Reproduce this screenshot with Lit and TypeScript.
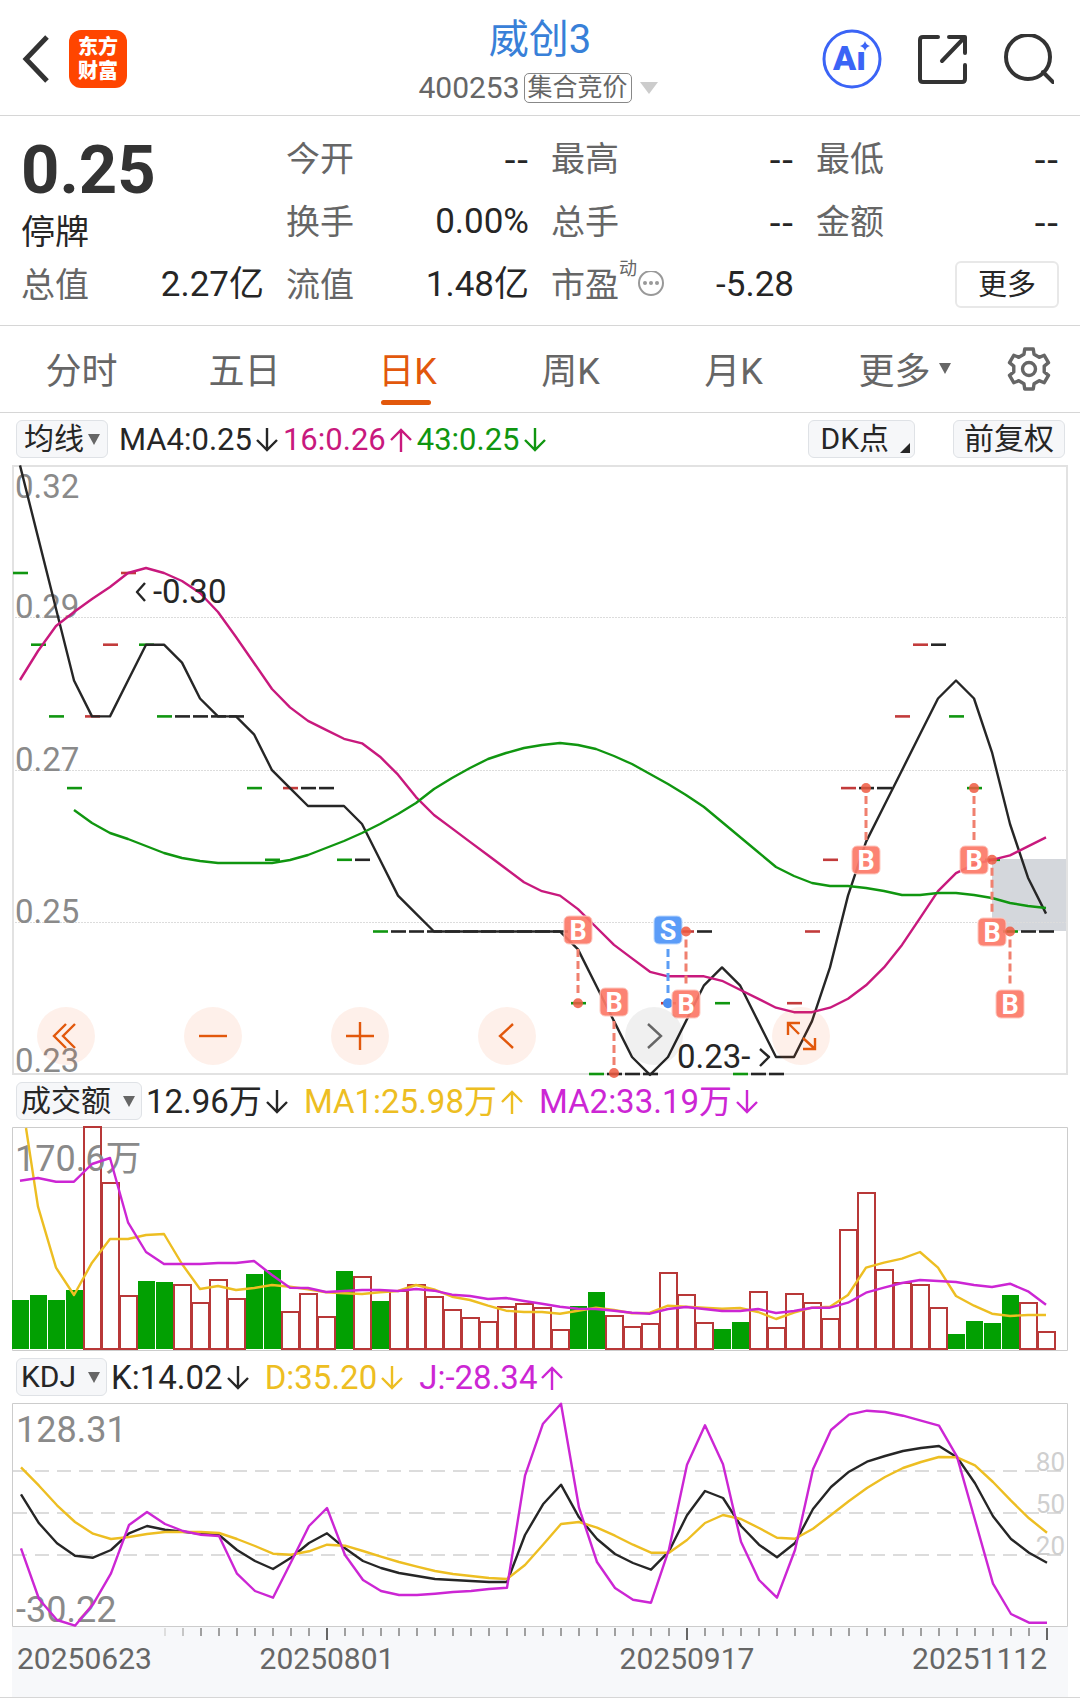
import { LitElement, html, svg, css } from "lit";
import { customElement, property, state } from "lit/decorators.js";
import { classMap } from "lit/directives/class-map.js";

type Tone = "up" | "down" | "flat";

const STEP = 18;
const xAt = (i: number, origin = 20) => origin + STEP * i;
const points = (ys: number[], origin = 20, first = 0) =>
  ys.map((y, i) => `${xAt(i + first, origin)},${y.toFixed(1)}`).join(" ");

/* Closing prices in cents, three earlier sessions first. */
const EARLIER = [33, 32, 31];
const CLOSES = [
  30, 29, 28, 27, 28, 29, 30, 29, 28, 28, 28, 28, 28, 27, 26, 27, 27, 27, 26, 26,
  25, 25, 25, 25, 25, 25, 25, 25, 25, 25, 25, 24, 23, 23, 23, 23, 24, 25, 25, 24,
  23, 23, 23, 24, 25, 26, 27, 27, 27, 28, 29, 29, 28, 27, 26, 25, 25, 25,
];
const priceY = (cents: number) => 931.5 + (25 - cents) * 71.7;
const average = (list: number[], end: number, n: number) =>
  list.slice(end - n + 1, end + 1).reduce((a, b) => a + b, 0) / n;

const ALL = [...EARLIER, ...CLOSES];
const MA4 = CLOSES.map((_, i) => priceY(average(ALL, i + 3, 4)));
const MA16 = [
  680, 651, 626, 612, 599, 587, 573, 568, 573, 581, 593, 612, 637, 663, 689,
  ...CLOSES.slice(15).map((_, i) => priceY(average(CLOSES, i + 15, 16))),
];
const MA43 = [
  810, 823, 833, 839, 846, 853, 858, 861, 863, 863, 863, 863, 860, 855, 848, 841,
  833, 824, 814, 803, 789, 778, 768, 759, 753, 748, 745, 743, 745, 749, 756, 764,
  774, 784, 795, 807, 822, 837, 852, 867, 876, 883, 886, 886, 888, 891, 895, 895,
  893, 893, 895, 898, 903, 906, 908,
];

const toneAt = (i: number): Tone => {
  const before = i ? CLOSES[i - 1] : EARLIER[2];
  return CLOSES[i] > before ? "up" : CLOSES[i] < before ? "down" : "flat";
};

interface Marker { i: number; y: number; dot: number; side: "B" | "S"; }
const MARKERS: Marker[] = [
  { i: 31, y: 930, dot: 24, side: "B" },
  { i: 33, y: 1002, dot: 23, side: "B" },
  { i: 36, y: 930, dot: 24, side: "S" },
  { i: 37, y: 1004, dot: 25, side: "B" },
  { i: 47, y: 860, dot: 27, side: "B" },
  { i: 53, y: 860, dot: 27, side: "B" },
  { i: 54, y: 932, dot: 26, side: "B" },
  { i: 55, y: 1004, dot: 25, side: "B" },
];

/* Bar heights and line levels are stored in thirds of a unit. */
const third = (base: number) => (v: number) => base + v / 3;
const VOLUME = [
  540, 525, 540, 510, 22, 188, 527, 483, 486, 494, 548, 480, 536, 462, 450, 575,
  521, 591, 453, 470, 543, 512, 494, 530, 570, 594, 605, 561, 551, 564, 629, 558,
  516, 588, 621, 612, 459, 524, 608, 627, 606, 516, 624, 521, 548, 597, 329, 218,
  450, 488, 495, 564, 642, 603, 609, 525, 548, 636,
].map(third(1120));
const VOLUME_DOWN = new Set([0, 1, 2, 3, 7, 8, 13, 14, 18, 20, 31, 32, 39, 40, 52, 53, 54, 55]);
/* Starts at the second session; the first one lies above the plot. */
const VMA1 = [
  260, 443, 525, 428, 357, 357, 345, 342, 432, 507, 498, 510, 504, 495, 500,
  508, 517, 520, 522, 517, 513, 495, 508, 530, 540, 557, 572, 576, 576, 581, 572,
  563, 570, 580, 578, 557, 560, 563, 566, 564, 576, 597, 578, 563, 560, 525, 443,
  428, 416, 396, 443, 528, 557, 581, 588, 585, 585,
].map(third(1120));
const VMA2 = [
  182, 174, 185, 185, 132, 114, 307, 396, 432, 432, 432, 429, 429, 423, 465, 503,
  504, 516, 513, 510, 510, 513, 507, 512, 524, 528, 537, 534, 543, 551, 560, 566,
  567, 572, 578, 581, 567, 561, 567, 573, 573, 567, 579, 573, 563, 563, 548, 518,
  503, 489, 480, 483, 486, 495, 501, 491, 514, 554,
].map(third(1120));

const K_LINE = [
  313, 400, 460, 497, 503, 480, 430, 408, 419, 425, 431, 435, 480, 513, 537, 503,
  459, 430, 475, 513, 534, 549, 558, 567, 570, 573, 576, 576, 435, 343, 284, 382,
  447, 492, 519, 539, 484, 376, 303, 324, 408, 464, 502, 459, 357, 291, 245, 215,
  198, 183, 174, 168, 202, 280, 379, 447, 488, 518,
].map(third(1390));
const D_LINE = [
  232, 287, 346, 396, 431, 447, 441, 432, 426, 426, 426, 429, 447, 468, 491, 494,
  484, 464, 467, 483, 500, 516, 530, 543, 552, 558, 564, 567, 525, 464, 402, 396,
  413, 437, 464, 488, 488, 450, 399, 375, 387, 414, 443, 446, 416, 375, 333, 294,
  261, 234, 216, 201, 202, 226, 276, 332, 385, 428,
].map(third(1390));
const J_LINE = [
  475, 627, 690, 707, 643, 550, 405, 366, 402, 423, 434, 438, 551, 603, 623, 517,
  408, 354, 495, 570, 603, 615, 615, 611, 606, 603, 597, 593, 257, 101, 41, 353,
  516, 594, 629, 638, 478, 224, 106, 223, 455, 570, 623, 480, 238, 120, 74, 62,
  66, 77, 92, 107, 200, 390, 581, 672, 698, 698,
].map(third(1390));

const gearPath = () => {
  const pts: string[] = [];
  const at = (r: number, deg: number) => {
    const a = (deg * Math.PI) / 180;
    pts.push(`${(24 + r * Math.cos(a)).toFixed(2)} ${(24 + r * Math.sin(a)).toFixed(2)}`);
  };
  for (let k = 0; k < 6; k++) {
    const c = -90 + 60 * k;
    at(15.5, c - 19);
    at(20.5, c - 12);
    at(20.5, c + 12);
    at(15.5, c + 19);
  }
  return `M${pts.join("L")}Z`;
};

const chartStyles = css`
  :host { display: block; }
  .chart { display: block; width: 100%; height: auto; overflow: visible; }
  text { font-family: Roboto, "Noto Sans CJK SC", sans-serif; }
  .line { fill: none; stroke-width: 2.4; stroke-linejoin: round; }
  .black { stroke: #262626; }
  .magenta { stroke: #c8197d; }
  .green { stroke: #109610; }
  .gold { stroke: #edbe22; }
  .violet { stroke: #cc26d4; }
  .frame { fill: none; stroke: #cccccc; stroke-width: 1; }
  .label { fill: #8a8a8a; font-size: 36px; }
`;

@customElement("price-chart")
export class PriceChart extends LitElement {
  static styles = [chartStyles, css`
    .frame { stroke: #e2e2e2; stroke-width: 2; }
    .grid { stroke: #dcdcdc; stroke-width: 1; stroke-dasharray: 2 1; }
    .label, .note { font-size: 33px; }
    .note { fill: #262626; }
    .tick { stroke-width: 2.6; }
    .up { stroke: #c23b3b; }
    .down { stroke: #109610; }
    .flat { stroke: #262626; }
    .zone { fill: #d4d7dc; }
    .stem { stroke-width: 3; stroke-dasharray: 8 4; }
    .B .stem { stroke: #f0806f; }
    .B .dot { fill: #ef5a42; fill-opacity: 0.85; }
    .B .box { fill: #fc7867; fill-opacity: 0.92; stroke: #fdc9c1; }
    .S .stem { stroke: #5b9df5; }
    .S .dot { fill: #4a8df0; }
    .S .box { fill: #5b9cf8; stroke: #bcd8fd; }
    .letter { fill: #ffffff; font-size: 27px; font-weight: 700; text-anchor: middle; }
  `];

  private marker(m: Marker) {
    const x = xAt(m.i);
    const dotY = Math.min(priceY(m.dot), 1073);
    const from = dotY > m.y ? m.y + 19 : m.y - 19;
    const to = dotY > m.y ? dotY - 8 : dotY + 8;
    return svg`<g class=${m.side}>
      <line class="stem" x1=${x} x2=${x} y1=${Math.min(from, to)} y2=${Math.max(from, to)}></line>
      <circle class="dot" cx=${x} cy=${dotY} r="5"></circle>
      <rect class="box" x=${x - 14} y=${m.y - 14} width="28" height="28" rx="5"></rect>
      <text class="letter" x=${x} y=${m.y + 10}>${m.side}</text>
    </g>`;
  }

  render() {
    return html`<svg class="chart" viewBox="12 465 1056 610" role="img" aria-label="日K">
      <rect class="zone" x="992" y="859" width="75" height="72"></rect>
      ${[617.5, 770.5, 922.5].map((y) => svg`<line class="grid" x1="12" x2="1067" y1=${y} y2=${y}></line>`)}
      <path class="frame" d="M13 466H1067V1074H13Z"></path>
      ${[["0.32", 498], ["0.29", 618], ["0.27", 771], ["0.25", 923], ["0.23", 1072]].map(
        ([t, y]) => svg`<text class="label" x="15" y=${y}>${t}</text>`)}
      ${CLOSES.map((c, i) => svg`<line class="tick ${toneAt(i)}" x1=${xAt(i) - 7} x2=${xAt(i) + 8}
        y1=${Math.min(priceY(c), 1074)} y2=${Math.min(priceY(c), 1074)}></line>`)}
      <polyline class="line black" points=${points(MA4)}></polyline>
      <polyline class="line magenta" points=${points(MA16)}></polyline>
      <polyline class="line green" points=${points(MA43, 20, 3)}></polyline>
      ${MARKERS.map((m) => this.marker(m))}
      <path class="line black" d="M145 583L137 592L145 601M760 1049L769 1057L760 1066"></path>
      <text class="note" x="153" y="603">-0.30</text>
      <text class="note" x="677" y="1068">0.23-</text>
    </svg>`;
  }
}

@customElement("volume-chart")
export class VolumeChart extends LitElement {
  static styles = [chartStyles, css`
    .rise { fill: #ffffff; stroke: #b83838; stroke-width: 2; }
    .fall { fill: #02a002; }
  `];

  render() {
    return html`<svg class="chart" viewBox="12 1127 1056 224" role="img" aria-label="成交额">
      <path class="frame" d="M12.5 1127.5H1067.5V1350.5H12.5Z"></path>
      ${VOLUME.map((y, i) => {
        const left = 12 + STEP * i;
        const top = Math.round(y);
        return VOLUME_DOWN.has(i)
          ? svg`<rect class="fall" x=${left} y=${top} width="17" height=${1349 - top}></rect>`
          : svg`<rect class="rise" x=${left} y=${top} width="17" height=${1349 - top}></rect>`;
      })}
      <text class="label" x="15" y="1171">170.6万</text>
      <polyline class="line gold" points=${`26,1128 ${points(VMA1, 20, 1)}`}></polyline>
      <polyline class="line violet" points=${points(VMA2)}></polyline>
    </svg>`;
  }
}

@customElement("kdj-chart")
export class KdjChart extends LitElement {
  static styles = [chartStyles, css`
    .guide { stroke: #dcdcdc; stroke-width: 2; stroke-dasharray: 14 8; }
    .level { fill: #cfcfcf; font-size: 26px; text-anchor: end; }
  `];

  render() {
    return html`<svg class="chart" viewBox="12 1403 1056 224" role="img" aria-label="KDJ">
      ${[[80, 1471], [50, 1513], [20, 1555]].map(([n, y]) => svg`
        <line class="guide" x1="13" x2="1066" y1=${y} y2=${y}></line>
        <text class="level" x="1065" y=${y}>${n}</text>`)}
      <path class="frame" d="M12.5 1403.5H1067.5V1626.5H12.5Z"></path>
      <text class="label" x="16" y="1442">128.31</text>
      <text class="label" x="16" y="1622">-30.22</text>
      <polyline class="line black" points=${points(K_LINE, 21)}></polyline>
      <polyline class="line gold" points=${points(D_LINE, 21)}></polyline>
      <polyline class="line violet" points=${points(J_LINE, 21)}></polyline>
    </svg>`;
  }
}

@customElement("date-axis")
export class DateAxis extends LitElement {
  static styles = [chartStyles, css`
    :host { background: #f7f8fa; }
    .minor { stroke: #a0a0a0; stroke-width: 2; }
    .faint { stroke: #dedede; }
    .soft { stroke: #c6c6c6; }
    .major { stroke: #666666; stroke-width: 2; }
    .date { fill: #666666; font-size: 30px; }
    .mid { text-anchor: middle; }
    .end { text-anchor: end; }
  `];

  render() {
    const ticks = CLOSES.map((_, i) => i).slice(8);
    return html`<svg class="chart" viewBox="12 1627 1056 70" role="img" aria-label="20250623 - 20251112">
      ${ticks.map((i) => {
        const major = i % 20 === 17;
        const kind = major ? "major" : i === 8 ? "minor faint" : i === 9 ? "minor soft" : "minor";
        return svg`<line class=${kind} x1=${xAt(i, 21)} x2=${xAt(i, 21)} y1="1628" y2=${major ? 1640 : 1636}></line>`;
      })}
      <text class="date" x="17" y="1669">20250623</text>
      <text class="date mid" x="327" y="1669">20250801</text>
      <text class="date mid" x="687" y="1669">20250917</text>
      <text class="date end" x="1047" y="1669">20251112</text>
    </svg>`;
  }
}

@customElement("trend-value")
export class TrendValue extends LitElement {
  static styles = css`
    :host { display: inline-flex; align-items: center; gap: 4px; white-space: nowrap; }
    .arrow { width: 22px; height: 24px; fill: none; stroke: currentColor; stroke-width: 2.4; flex: none; }
  `;
  @property() text = "";
  @property() dir: "up" | "down" = "up";
  render() {
    return html`<span>${this.text}</span>
      <svg class="arrow" viewBox="0 0 22 24" aria-hidden="true">
        <path d=${this.dir === "up" ? "M11 24V2M1 12L11 2L21 12" : "M11 0V22M1 12L11 22L21 12"}></path>
      </svg>`;
  }
}

@customElement("app-root")
export class AppRoot extends LitElement {
  static styles = css`
    :host {
      display: block;
      background: #ffffff;
      color: #262626;
      font-family: Roboto, "Noto Sans CJK SC", sans-serif;
    }
    * { box-sizing: border-box; }
    button {
      font: inherit; color: inherit; background: none; border: 0; padding: 0; margin: 0; cursor: pointer;
    }
    svg { display: block; flex: none; }
    .ink { fill: none; stroke: #333333; stroke-width: 4; stroke-linejoin: round; stroke-linecap: round; }

    .top {
      display: grid; grid-template-columns: 1fr auto 1fr; align-items: center;
      height: 116px; padding: 3px 22px 0; border-bottom: 1px solid #d6d6d6;
    }
    .left, .right { display: flex; align-items: center; }
    .left { gap: 19px; }
    .right { justify-content: flex-end; gap: 36px; padding-right: 4px; }
    .brand {
      display: flex; flex-direction: column; align-items: center; justify-content: center;
      width: 58px; height: 58px; border-radius: 12px; background: #ff4500; color: #ffffff;
      font-size: 20px; line-height: 24px; font-weight: 900;
    }
    .back { stroke-width: 5; stroke-linecap: butt; stroke-linejoin: miter; }
    .ring { fill: none; stroke: #3b64f6; stroke-width: 3; }
    .ai { fill: #3b64f6; font-family: Roboto, sans-serif; font-weight: 900; font-size: 34px; }
    .star { fill: #3b64f6; }
    .name { display: flex; flex-direction: column; align-items: center; gap: 7px; padding-top: 4px; }
    .title { margin: 0; font-size: 40px; line-height: 46px; font-weight: 400; color: #3880d8; }
    .code { display: flex; align-items: center; gap: 4px; font-size: 30px; line-height: 36px; color: #666666; }
    .tag {
      height: 30px; padding: 0 3px; border: 1px solid #888888; border-radius: 5px;
      font-size: 25px; line-height: 27px;
    }
    .caret { width: 0; height: 0; border: 9px solid transparent; border-top: 12px solid #cccccc; border-bottom: 0; }
    .code .caret { margin: 0 4px; }

    .quote {
      display: grid; grid-template-columns: repeat(4, 1fr); grid-auto-rows: 63px; column-gap: 22px;
      padding: 11px 21px 9px; border-bottom: 1px solid #d6d6d6;
    }
    .last { grid-row: span 2; display: flex; flex-direction: column; }
    .price { font-size: 67px; line-height: 86px; font-weight: 700; color: #333333; }
    .status { font-size: 34px; line-height: 38px; }
    .stat { display: flex; align-items: center; justify-content: space-between; font-size: 35px; line-height: 40px; }
    .key { color: #666666; display: flex; align-items: center; font-size: 34px; }
    .blank { font-family: "DejaVu Sans", sans-serif; }
    .sup { font-size: 18px; line-height: 20px; align-self: flex-start; margin-top: -6px; }
    .hint { fill: none; stroke: #999999; stroke-width: 2; }
    .hintdot { fill: #999999; }
    .more-cell { display: flex; align-items: center; justify-content: flex-end; }
    .more {
      width: 104px; height: 47px; border: 2px solid #e8e8e8; border-radius: 6px; font-size: 29px; line-height: 40px;
    }

    .tabs { display: grid; grid-template-columns: repeat(6, 1fr) 102px; height: 87px; border-bottom: 1px solid #d6d6d6; }
    .tab {
      display: flex; align-items: center; justify-content: center; gap: 8px; position: relative;
      padding-top: 6px; font-size: 36px; line-height: 44px; color: #666666;
    }
    .tab.on { color: #e2580c; }
    .tab.on::after {
      content: ""; position: absolute; left: calc(50% - 27px); bottom: 7px;
      width: 50px; height: 5px; border-radius: 3px; background: #e2580c;
    }
    .tab.menu { padding-left: 16px; }
    .tab.menu .mini { margin-bottom: 8px; }
    .tab.gearcell { padding-top: 0; }
    .mini { width: 0; height: 0; border: 6px solid transparent; border-top: 11px solid #666666; border-bottom: 0; }
    .gear { fill: none; stroke: #666666; stroke-width: 3.4; stroke-linejoin: round; }

    .bar { display: flex; align-items: center; height: 52px; padding: 0 15px 0 16px; font-size: 33px; line-height: 38px; }
    .bar.small { font-size: 31px; }
    .pill {
      display: flex; align-items: center; height: 38px; padding: 0 7px; gap: 4px;
      border: 1px solid #dfe2e6; border-radius: 6px; background: #f6f7f9; font-size: 30px; line-height: 34px;
      white-space: nowrap; color: #262626;
    }
    .pill.wide { gap: 12px; padding: 0 6px 0 4px; }
    .pill.text { padding: 0 10px; }
    .values { display: flex; gap: 16px; margin-left: 4px; padding-top: 1px; }
    .small .values { gap: 5px; margin-left: 11px; }
    .tools { display: flex; gap: 38px; margin-left: auto; }
    .corner { width: 0; height: 0; border-left: 10px solid transparent; border-bottom: 10px solid #262626; align-self: flex-end; margin-bottom: 4px; }
    .pill.dk { padding: 0 4px 0 11px; gap: 11px; }
    .c-magenta { color: #c8197d; }
    .c-green { color: #109610; }
    .c-gold { color: #edbe22; }
    .c-violet { color: #cc26d4; }

    .plot { padding: 0 12px; }
    .stage { position: relative; }
    .pad { position: absolute; left: 25px; bottom: 10px; display: flex; gap: 89px; }
    .round {
      width: 58px; height: 58px; border-radius: 50%; background: rgba(240, 90, 20, 0.09); color: #e2580c;
    }
    .round.off { background: rgba(0, 0, 0, 0.06); color: #666666; }
    .glyph { fill: none; stroke: currentColor; stroke-width: 2.4; }
    .foot { border-top: 1px solid #d6d6d6; height: 6px; }
  `;

  @state() private tab = 2;

  private stat(key: string, value: string) {
    return html`<div class="stat"><span class="key">${key}</span>
      <span class=${classMap({ blank: value === "--" })}>${value}</span></div>`;
  }

  private round(label: string, d: string, off = false) {
    return html`<button class=${classMap({ round: true, off })} aria-label=${label}>
      <svg width="58" height="58" viewBox="-29 -29 58 58"><path class="glyph" d=${d}></path></svg>
    </button>`;
  }

  render() {
    return html`
      <header class="top">
        <div class="left">
          <button aria-label="返回">
            <svg width="28" height="48" viewBox="0 0 28 48"><path class="ink back" d="M25 2L4 24L25 46"></path></svg>
          </button>
          <div class="brand"><span>东方</span><span>财富</span></div>
        </div>
        <div class="name">
          <h1 class="title">威创3</h1>
          <div class="code"><span>400253</span><span class="tag">集合竞价</span><i class="caret"></i></div>
        </div>
        <div class="right">
          <button aria-label="智能助手">
            <svg width="60" height="60" viewBox="0 0 60 60">
              <circle class="ring" cx="30" cy="30" r="28"></circle>
              <text class="ai" x="11" y="41">Aı</text>
              <path class="star" d="M43 12Q44 16 48 17Q44 18 43 22Q42 18 38 17Q42 16 43 12Z"></path>
            </svg>
          </button>
          <button aria-label="分享">
            <svg width="50" height="50" viewBox="0 0 50 50">
              <path class="ink" d="M20 3H5Q2 3 2 6V45Q2 48 5 48H44Q47 48 47 45V31M31 3H47V19M46 4L24 27"></path>
            </svg>
          </button>
          <button aria-label="搜索">
            <svg width="50" height="50" viewBox="0 0 50 50">
              <circle class="ink" cx="24" cy="23" r="22"></circle><path class="ink" d="M39 38L49 48"></path>
            </svg>
          </button>
        </div>
      </header>

      <section class="quote">
        <div class="last"><span class="price">0.25</span><span class="status">停牌</span></div>
        ${this.stat("今开", "--")} ${this.stat("最高", "--")} ${this.stat("最低", "--")}
        ${this.stat("换手", "0.00%")} ${this.stat("总手", "--")} ${this.stat("金额", "--")}
        ${this.stat("总值", "2.27亿")} ${this.stat("流值", "1.48亿")}
        <div class="stat">
          <span class="key">市盈<span class="sup">动</span>
            <svg width="28" height="28" viewBox="0 0 28 28" aria-hidden="true">
              <circle class="hint" cx="14" cy="12" r="12"></circle>
              <circle class="hintdot" cx="8" cy="12" r="2"></circle>
              <circle class="hintdot" cx="14" cy="12" r="2"></circle>
              <circle class="hintdot" cx="20" cy="12" r="2"></circle>
            </svg>
          </span>
          <span>-5.28</span>
        </div>
        <div class="more-cell"><button class="more">更多</button></div>
      </section>

      <nav class="tabs">
        ${["分时", "五日", "日K", "周K", "月K", "更多"].map((t, i) => html`
          <button class=${classMap({ tab: true, on: this.tab === i, menu: i === 5 })} @click=${() => (this.tab = i)}>
            <span>${t}</span>${i === 5 ? html`<i class="mini"></i>` : null}
          </button>`)}
        <button class="tab gearcell" aria-label="设置">
          <svg width="48" height="48" viewBox="0 0 48 48">
            <path class="gear" d=${gearPath()}></path><circle class="gear" cx="24" cy="24" r="6.5"></circle>
          </svg>
        </button>
      </nav>

      <div class="bar small">
        <button class="pill"><span>均线</span><i class="mini"></i></button>
        <div class="values">
          <trend-value text="MA4:0.25" dir="down"></trend-value>
          <trend-value class="c-magenta" text="16:0.26" dir="up"></trend-value>
          <trend-value class="c-green" text="43:0.25" dir="down"></trend-value>
        </div>
        <div class="tools">
          <button class="pill dk"><span>DK点</span><i class="corner"></i></button>
          <button class="pill text">前复权</button>
        </div>
      </div>
      <div class="plot">
        <div class="stage">
          <price-chart></price-chart>
          <div class="pad">
            ${this.round("最早", "M0 -12L-12 0L0 12M9 -12L-3 0L9 12")}
            ${this.round("缩小", "M-14 0H14")}
            ${this.round("放大", "M-14 0H14M0 -14V14")}
            ${this.round("向左", "M6 -12L-7 0L6 12")}
            ${this.round("向右", "M-6 -12L7 0L-6 12", true)}
            ${this.round("全屏", "M-13 -1V-13H-1M-13 -13L-2 -2M14 2V13H2M14 13L2 2")}
          </div>
        </div>
      </div>

      <div class="bar">
        <button class="pill wide"><span>成交额</span><i class="mini"></i></button>
        <div class="values">
          <trend-value text="12.96万" dir="down"></trend-value>
          <trend-value class="c-gold" text="MA1:25.98万" dir="up"></trend-value>
          <trend-value class="c-violet" text="MA2:33.19万" dir="down"></trend-value>
        </div>
      </div>
      <div class="plot"><volume-chart></volume-chart></div>

      <div class="bar">
        <button class="pill wide"><span>KDJ</span><i class="mini"></i></button>
        <div class="values">
          <trend-value text="K:14.02" dir="down"></trend-value>
          <trend-value class="c-gold" text="D:35.20" dir="down"></trend-value>
          <trend-value class="c-violet" text="J:-28.34" dir="up"></trend-value>
        </div>
      </div>
      <div class="plot"><kdj-chart></kdj-chart><date-axis></date-axis></div>
      <div class="foot"></div>
    `;
  }
}
